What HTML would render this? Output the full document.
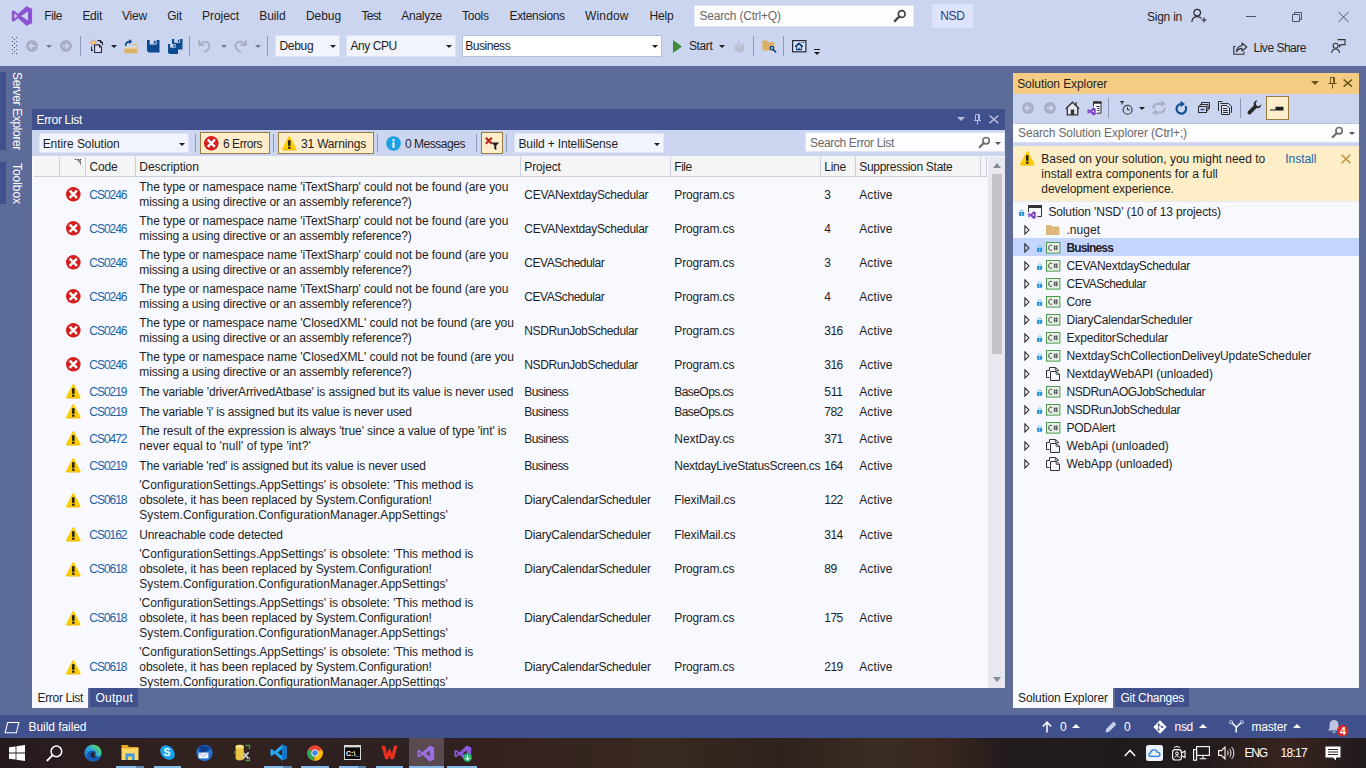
<!DOCTYPE html>
<html><head><meta charset="utf-8"><title>NSD - Microsoft Visual Studio</title>
<style>
*{box-sizing:border-box;margin:0;padding:0}
html,body{width:1366px;height:768px;overflow:hidden}
body{position:relative;background:#5D6B99;font-family:"Liberation Sans",sans-serif;font-size:12px;color:#1E1E1E}
.a{position:absolute}
.t{position:absolute;white-space:nowrap;line-height:16px}
svg{position:absolute;overflow:visible}
#top{left:0;top:0;width:1366px;height:66px;background:#CCD5F0}
.sep{position:absolute;width:1px;background:#8F98BB}
.combo{position:absolute;background:#F1F4FC;border:1px solid #DDE3F6}
.arr{position:absolute;width:0;height:0;border-left:3px solid transparent;border-right:3px solid transparent;border-top:3px solid #1E1E1E}
.arrg{border-top-color:#737990}
#status{left:0;top:715px;width:1366px;height:23px;background:#40508D;color:#fff}
#taskbar{left:0;top:738px;width:1366px;height:30px;background:linear-gradient(90deg,#241a1d 0px,#2c1e1f 80px,#32221f 190px,#2d2121 420px,#33211f 480px,#382920 667px,#2f211d 780px,#3b2d22 878px,#38261f 948px,#241c1c 1000px,#1f1b1c 1120px,#221b1c 1200px,#38241f 1290px,#211a1c 1366px)}
#el{left:32px;top:109px;width:973px;height:579px;background:#F7F9FE}
#se{left:1013px;top:73px;width:346px;height:615px;background:#F7F9FE}
.code{color:#1C64A8}
.tbtn{position:absolute;background:#FDEDCB;border:1px solid #9A7D3C}
.tab{position:absolute;height:20px}

</style></head><body>
<div id="top" class="a"><svg style="left:11px;top:6px" width="22" height="20" viewBox="0 0 22 20"><path d="M15.4 0.2 L21.1 2.7 V17.3 L15.4 19.8 L6.9 12.3 L2.7 15.8 L0.8 14.8 V5.2 L2.7 4.2 L6.9 7.7 Z M17 5.4 L10.2 10 L17 14.6 Z M3.5 7.6 V12.4 L6.4 10 Z" fill="#8A57D1" fill-rule="evenodd"/></svg><span class="t" style="left:44.3px;top:8px;letter-spacing:-0.436px;">File</span><span class="t" style="left:82.4px;top:8px;letter-spacing:-0.272px;">Edit</span><span class="t" style="left:122px;top:8px;letter-spacing:-0.249px;">View</span><span class="t" style="left:167.2px;top:8px;letter-spacing:-0.181px;">Git</span><span class="t" style="left:202px;top:8px;letter-spacing:-0.051px;">Project</span><span class="t" style="left:259.3px;top:8px;letter-spacing:-0.098px;">Build</span><span class="t" style="left:306px;top:8px;letter-spacing:-0.075px;">Debug</span><span class="t" style="left:361.5px;top:8px;letter-spacing:-0.729px;">Test</span><span class="t" style="left:401.3px;top:8px;letter-spacing:-0.286px;">Analyze</span><span class="t" style="left:462px;top:8px;letter-spacing:-0.243px;">Tools</span><span class="t" style="left:509.5px;top:8px;letter-spacing:-0.350px;">Extensions</span><span class="t" style="left:585px;top:8px;letter-spacing:0.169px;">Window</span><span class="t" style="left:649.4px;top:8px;letter-spacing:-0.147px;">Help</span><div class="a" style="left:694px;top:5px;width:220px;height:22px;background:#FDFDFF;border:1px solid #E3E8F7"></div><span class="t" style="left:699.5px;top:8px;letter-spacing:-0.204px;color:#6A6A6A">Search (Ctrl+Q)</span><svg style="left:893px;top:9px" width="14" height="14" viewBox="0 0 14 14"><circle cx="8.7" cy="5" r="3.4" fill="none" stroke="#424242" stroke-width="1.7"/><path d="M6.2 7.6 L1.2 12.6" stroke="#424242" stroke-width="2.2" stroke-linecap="butt"/></svg><div class="a" style="left:932px;top:4px;width:41px;height:24px;background:#DDE4F9"></div><span class="t" style="left:940.2px;top:8px;letter-spacing:-0.348px;color:#2E3B80">NSD</span><span class="t" style="left:1147px;top:8.5px;letter-spacing:-0.243px;">Sign in</span><svg style="left:1191px;top:8px" width="17" height="16" viewBox="0 0 17 16"><circle cx="6.2" cy="4.6" r="3.3" fill="none" stroke="#2b2b2b" stroke-width="1.2"/><path d="M0.8 14 C1.2 10.3 3.4 8.6 6.2 8.6 C8 8.6 9.4 9.2 10.4 10.4" fill="none" stroke="#2b2b2b" stroke-width="1.2"/><path d="M13 9.5 V14.5 M10.5 12 H15.5" stroke="#2b2b2b" stroke-width="1.1"/></svg><svg style="left:1240px;top:8px" width="120" height="18" viewBox="0 0 120 18"><path d="M6 8.5 H16" stroke="#4A5270" stroke-width="1"/><path d="M52.5 6.5 H59.5 V13.5 H52.5 Z M54.5 6.5 V4.5 H61.5 V11.5 H59.5" fill="none" stroke="#4A5270" stroke-width="1"/><path d="M98.5 4 L108.5 14 M108.5 4 L98.5 14" stroke="#4A5270" stroke-width="1"/></svg><svg style="left:12px;top:37px" width="5" height="17" viewBox="0 0 5 17"><rect x="0" y="0" width="1" height="1" fill="#4C5270"/><rect x="4" y="0" width="1" height="1" fill="#4C5270"/><rect x="2" y="2" width="1" height="1" fill="#4C5270"/><rect x="0" y="4" width="1" height="1" fill="#4C5270"/><rect x="4" y="4" width="1" height="1" fill="#4C5270"/><rect x="2" y="6" width="1" height="1" fill="#4C5270"/><rect x="0" y="8" width="1" height="1" fill="#4C5270"/><rect x="4" y="8" width="1" height="1" fill="#4C5270"/><rect x="2" y="10" width="1" height="1" fill="#4C5270"/><rect x="0" y="12" width="1" height="1" fill="#4C5270"/><rect x="4" y="12" width="1" height="1" fill="#4C5270"/><rect x="2" y="14" width="1" height="1" fill="#4C5270"/><rect x="0" y="16" width="1" height="1" fill="#4C5270"/><rect x="4" y="16" width="1" height="1" fill="#4C5270"/></svg><svg style="left:26px;top:40px" width="12" height="12" viewBox="0 0 12 12"><g><circle cx="6" cy="6" r="6" fill="#A9AEC6"/><path d="M9.2 6 H3.6 M6 3.4 L3.4 6 L6 8.6" fill="none" stroke="#CCD5F0" stroke-width="1.5"/></g></svg><div class="arr arrg" style="left:46px;top:45px"></div><svg style="left:60px;top:40px" width="12" height="12" viewBox="0 0 12 12"><g transform="translate(12,0) scale(-1,1)"><circle cx="6" cy="6" r="6" fill="#A9AEC6"/><path d="M9.2 6 H3.6 M6 3.4 L3.4 6 L6 8.6" fill="none" stroke="#CCD5F0" stroke-width="1.5"/></g></svg><div class="sep" style="left:80px;top:36px;height:20px"></div><svg style="left:89px;top:38px" width="15" height="16" viewBox="0 0 15 16"><path d="M8.4 2.6 H11.4 L13.5 4.7 V7.2" fill="none" stroke="#22283A" stroke-width="1.1"/><path d="M11 2.1 L14 5.1 H11 Z" fill="#22283A"/><path d="M5.6 6.9 H10.2 L12.5 9.2 V14.5 H5.6 Z" fill="#DCDDF2" stroke="#22283A" stroke-width="1.1"/><path d="M10 6.4 L13 9.4 H10 Z" fill="#22283A"/><path d="M2.5 8.6 V12.4 H4" fill="none" stroke="#22283A" stroke-width="1.1"/><path d="M4.4 1.2 V8 M1 4.6 H7.8 M2.1 2.3 L6.7 6.9 M6.7 2.3 L2.1 6.9" stroke="#DB8E22" stroke-width="0.9"/><circle cx="4.4" cy="4.6" r="1.7" fill="#F5B64A"/><circle cx="4.4" cy="4.6" r="0.9" fill="#FFF6DC"/></svg><div class="arr" style="left:111px;top:45px"></div><svg style="left:124px;top:39px" width="15" height="15" viewBox="0 0 15 15"><path d="M7.6 5.6 H13 V9.6" fill="none" stroke="#E3BC6E" stroke-width="1"/><rect x="0.5" y="8.2" width="12.6" height="1.7" fill="#EFD9A8"/><path d="M0.4 14.3 V9.7 H13.7 L12.9 14.3 Z" fill="#DDB062"/><path d="M1.8 7 C1.3 4 3.4 2.6 6 2.6" fill="none" stroke="#0E4A8F" stroke-width="1.7"/><path d="M5 0 L8.4 2.6 L5 5.2 Z" fill="#0E4A8F"/></svg><svg style="left:147px;top:40px" width="12.5" height="12.5" viewBox="0 0 12 12"><path d="M0 0 H12 V12 H1.6 L0 10.4 Z" fill="#0E4A8F"/><rect x="2.6" y="0" width="6.6" height="4.4" fill="#CCD5F0"/><rect x="6.6" y="0.8" width="1.6" height="2.8" fill="#0E4A8F"/></svg><svg style="left:172px;top:39px" width="10.5" height="10.5" viewBox="0 0 12 12"><path d="M0 0 H12 V12 H1.6 L0 10.4 Z" fill="#0E4A8F"/><rect x="2.6" y="0" width="6.6" height="4.4" fill="#CCD5F0"/><rect x="6.6" y="0.8" width="1.6" height="2.8" fill="#0E4A8F"/></svg><svg style="left:168px;top:44px" width="10" height="10" viewBox="0 0 12 12"><path d="M0 0 H12 V12 H1.6 L0 10.4 Z" fill="#0E4A8F"/><rect x="2.6" y="0" width="6.6" height="4.4" fill="#CCD5F0"/><rect x="6.6" y="0.8" width="1.6" height="2.8" fill="#0E4A8F"/></svg><div class="sep" style="left:189px;top:36px;height:20px"></div><svg style="left:198px;top:39px" width="14" height="14" viewBox="0 0 14 14"><path d="M1.2 1 V6.2 H6.4" fill="none" stroke="#A9AEC0" stroke-width="1.8"/><path d="M1.8 5.6 C4.5 2 9.5 1.8 11.2 5 C12.6 8 10.4 11.4 6.2 13.2" fill="none" stroke="#A9AEC0" stroke-width="1.8"/></svg><div class="arr arrg" style="left:221px;top:45px"></div><svg style="left:233px;top:39px" width="14" height="14" viewBox="0 0 14 14"><g transform="translate(14,0) scale(-1,1)"><path d="M1.2 1 V6.2 H6.4" fill="none" stroke="#A9AEC0" stroke-width="1.8"/><path d="M1.8 5.6 C4.5 2 9.5 1.8 11.2 5 C12.6 8 10.4 11.4 6.2 13.2" fill="none" stroke="#A9AEC0" stroke-width="1.8"/></g></svg><div class="arr arrg" style="left:255px;top:45px"></div><div class="sep" style="left:267px;top:36px;height:20px"></div><div class="combo" style="left:275px;top:35px;width:65px;height:22px"></div><span class="t" style="left:279.5px;top:38px;letter-spacing:-0.315px;">Debug</span><div class="arr" style="left:330px;top:45px"></div><div class="combo" style="left:346px;top:35px;width:110px;height:22px"></div><span class="t" style="left:350.5px;top:38px;letter-spacing:-0.437px;">Any CPU</span><div class="arr" style="left:446px;top:45px"></div><div class="a" style="left:462px;top:35px;width:200px;height:22px;background:#fff;border:1px solid #B4BEDF"></div><span class="t" style="left:465.2px;top:38px;letter-spacing:-0.463px;">Business</span><div class="arr" style="left:652px;top:45px"></div><svg style="left:672.5px;top:39.5px" width="9" height="13" viewBox="0 0 9 13"><path d="M0 0 L9 6.5 L0 13 Z" fill="#3F8B3A"/></svg><span class="t" style="left:689px;top:38px;letter-spacing:-0.389px;">Start</span><div class="arr" style="left:719px;top:45px"></div><svg style="left:734px;top:39px" width="12" height="14" viewBox="0 0 12 14"><path d="M5 0.5 C7 3 4 5.5 5.6 8 C6.4 6 8 5.6 8 3.6 C10.4 6 11.6 9.4 9.4 12 C7.6 14 3.6 14 1.8 12 C-0.2 9.6 0.8 6.4 3 4.6 C3 6 3.4 6.6 4 7 C3.4 4.4 4 2 5 0.5 Z" fill="#B9BED0"/></svg><div class="sep" style="left:753px;top:36px;height:20px"></div><svg style="left:762px;top:40px" width="16" height="14" viewBox="0 0 16 14"><path d="M0.4 10.6 V0.6 H5 L6.4 2.2 H12.4 V10.6 Z" fill="#DDB062"/><circle cx="9.9" cy="8.1" r="1.8" fill="#A8D8F5" stroke="#0F3F7F" stroke-width="1.3"/><path d="M11.2 9.5 L14 12.4" stroke="#0F3F7F" stroke-width="1.7"/></svg><div class="sep" style="left:783px;top:36px;height:20px"></div><svg style="left:792px;top:40px" width="14.5" height="12.5" viewBox="0 0 14.5 12.5"><rect x="0.6" y="0.6" width="13.3" height="11.2" fill="#DCE2F6" stroke="#22283A" stroke-width="1.2"/><path d="M4.6 6.2 V9.6 H9.4 V6.2 L7 4 Z" fill="#EEF2FC" stroke="#0E3F7F" stroke-width="1.1"/><path d="M3 6.7 L7 3.1 L11 6.7" fill="none" stroke="#0E3F7F" stroke-width="1.3"/><rect x="6.3" y="7.6" width="1.4" height="2.3" fill="#0E3F7F"/><rect x="9.4" y="2" width="1" height="1" fill="#22283A"/><rect x="11.2" y="2" width="1" height="1" fill="#22283A"/></svg><div class="a" style="left:814px;top:49px;width:6px;height:1px;background:#1E1E1E"></div><div class="arr" style="left:814px;top:52px"></div><svg style="left:1233px;top:41px" width="15" height="14" viewBox="0 0 15 14"><path d="M2.5 5.5 H0.8 V13.2 H11 V10.5" fill="none" stroke="#333" stroke-width="1.1"/><path d="M3.4 10.6 C3.8 7 6 5 9 4.8 V2 L13.8 6 L9 10 V7.4 C6.6 7.4 4.8 8.4 3.4 10.6 Z" fill="none" stroke="#333" stroke-width="1.1" stroke-linejoin="round"/></svg><span class="t" style="left:1253.5px;top:39.5px;letter-spacing:-0.487px;">Live Share</span><svg style="left:1331px;top:39px" width="15" height="15" viewBox="0 0 15 15"><path d="M6.5 0.6 H14 V5.6 H10.4 L8.6 7.4 V5.6" fill="none" stroke="#333" stroke-width="1.1"/><circle cx="4.6" cy="6.8" r="2.5" fill="none" stroke="#333" stroke-width="1.1"/><path d="M0.6 14 C1 11.2 2.6 10 4.6 10 C6.6 10 8.2 11.2 8.6 14" fill="none" stroke="#333" stroke-width="1.1"/></svg></div><div class="a" style="left:0;top:72px;width:6px;height:78px;background:#40508D"></div><div class="a" style="left:0;top:162px;width:6px;height:42px;background:#40508D"></div><span class="t" style="left:24.5px;top:72.3px;letter-spacing:-0.358px;color:#fff;transform-origin:0 0;transform:rotate(90deg)">Server Explorer</span><span class="t" style="left:24.5px;top:162.5px;letter-spacing:-0.054px;color:#fff;transform-origin:0 0;transform:rotate(90deg)">Toolbox</span><div id="el" class="a"><div class="a" style="left:0;top:0;width:973px;height:21px;background:#40508D"></div><span class="t" style="left:4.5px;top:3px;letter-spacing:-0.319px;color:#fff">Error List</span><div class="arr" style="left:925px;top:8px;border-top-color:#B4BCDC;border-width:0;border-left:4px solid transparent;border-right:4px solid transparent;border-top:4px solid #B4BCDC"></div><svg style="left:941px;top:5px" width="9" height="12" viewBox="0 0 9 12"><path d="M2.5 0.5 H6.5 V6.5 H2.5 Z M5.5 0.5 V6.5 M1 6.5 H8 M4.5 6.5 V10.8" fill="none" stroke="#B4BCDC" stroke-width="1"/></svg><svg style="left:957.1px;top:5.7px" width="9.9" height="8.6" viewBox="0 0 9.9 8.6"><path d="M0.6 0.5 L9.3 8.1 M9.3 0.5 L0.6 8.1" stroke="#B4BCDC" stroke-width="1.5"/></svg><div class="a" style="left:0;top:21px;width:973px;height:26px;background:#CCD5F0"></div><div class="combo" style="left:7px;top:24px;width:150px;height:20px"></div><span class="t" style="left:10.7px;top:27px;letter-spacing:-0.070px;">Entire Solution</span><div class="arr" style="left:146.5px;top:33.5px"></div><div class="sep" style="left:162.5px;top:25px;height:18px"></div><div class="tbtn" style="left:168px;top:23px;width:70px;height:22px"></div><svg style="left:171.8px;top:26.7px" width="14.6" height="14.6" viewBox="0 0 14.6 14.6"><circle cx="7.3" cy="7.3" r="7.3" fill="#D81E1E"/><path d="M3.7 3.7 L10.9 10.9 M10.9 3.7 L3.7 10.9" stroke="#fff" stroke-width="2.4"/></svg><span class="t" style="left:191px;top:26.5px;letter-spacing:-0.461px;">6 Errors</span><div class="sep" style="left:241px;top:25px;height:18px"></div><div class="tbtn" style="left:246px;top:23px;width:96px;height:22px"></div><svg style="left:249.8px;top:26.6px" width="14.6" height="14.4" viewBox="0 0 14.6 14.4"><path d="M7.3 1 L13.7 13.4 H0.9 Z" fill="#FFCC00" stroke="#FFCC00" stroke-width="1.8" stroke-linejoin="round"/><path d="M1.2 13.9 H13.4" stroke="#E8B500" stroke-width="0.8"/><path d="M7.3 4.2 V9.8" stroke="#1E1E1E" stroke-width="2.5"/><rect x="6.05" y="10.7" width="2.5" height="2" fill="#1E1E1E"/></svg><span class="t" style="left:269px;top:26.5px;letter-spacing:-0.175px;">31 Warnings</span><div class="sep" style="left:345px;top:25px;height:18px"></div><svg style="left:354px;top:26.5px" width="15" height="15" viewBox="0 0 15 15"><circle cx="7.5" cy="7.5" r="7.3" fill="#1BA1E2"/><rect x="6.5" y="6.2" width="2" height="5.6" fill="#fff"/><rect x="6.5" y="3.2" width="2" height="2" fill="#fff"/></svg><span class="t" style="left:373px;top:26.5px;letter-spacing:-0.470px;">0 Messages</span><div class="sep" style="left:444px;top:25px;height:18px"></div><div class="tbtn" style="left:449px;top:23px;width:22px;height:22px"></div><svg style="left:453px;top:27.6px" width="15" height="14" viewBox="0 0 15 14"><path d="M0.8 0.8 L6.8 6.8 M6.8 0.8 L0.8 6.8" stroke="#B8201A" stroke-width="2"/><path d="M6.4 5.4 H14.2 L11.3 8.6 V13.2 L9.3 11.8 V8.6 Z" fill="#1E1E1E"/></svg><div class="sep" style="left:474px;top:25px;height:18px"></div><div class="combo" style="left:482px;top:24px;width:150px;height:20px"></div><span class="t" style="left:486.5px;top:27px;letter-spacing:-0.145px;">Build + IntelliSense</span><div class="arr" style="left:621.5px;top:33.5px"></div><div class="a" style="left:773px;top:23px;width:200px;height:20px;background:#FDFDFF;border:1px solid #DDE3F3"></div><span class="t" style="left:778px;top:26px;letter-spacing:-0.355px;color:#6A6A6A">Search Error List</span><svg style="left:945.5px;top:27px" width="13" height="13" viewBox="0 0 14 14"><circle cx="8.7" cy="5" r="3.4" fill="none" stroke="#6E6E6E" stroke-width="1.8"/><path d="M6.2 7.6 L1.2 12.6" stroke="#6E6E6E" stroke-width="2.4"/></svg><div class="arr" style="left:962.5px;top:32.5px;border-top-color:#555"></div><div class="a" style="left:2px;top:47px;width:953px;height:21px;background:#F5F5F6;border-bottom:1px solid #CCCEDB"></div><div class="a" style="left:27px;top:48px;width:1px;height:19px;background:#CCCEDB"></div><div class="a" style="left:53px;top:48px;width:1px;height:19px;background:#CCCEDB"></div><div class="a" style="left:103px;top:48px;width:1px;height:19px;background:#CCCEDB"></div><div class="a" style="left:488px;top:48px;width:1px;height:19px;background:#CCCEDB"></div><div class="a" style="left:638px;top:48px;width:1px;height:19px;background:#CCCEDB"></div><div class="a" style="left:788px;top:48px;width:1px;height:19px;background:#CCCEDB"></div><div class="a" style="left:823px;top:48px;width:1px;height:19px;background:#CCCEDB"></div><div class="a" style="left:948px;top:48px;width:1px;height:19px;background:#CCCEDB"></div><div class="a" style="left:954px;top:48px;width:1px;height:19px;background:#CCCEDB"></div><svg style="left:43px;top:50px" width="6" height="6" viewBox="0 0 6 6"><path d="M0 0.5 H6 M5.5 0 V5.6" stroke="#333" stroke-width="1" stroke-dasharray="1 0.6"/><path d="M1.8 1 H5 V4.4 Z" fill="#8a8a8a"/></svg><span class="t" style="left:57.5px;top:50px;letter-spacing:-0.172px;">Code</span><span class="t" style="left:107.3px;top:50px;letter-spacing:-0.048px;">Description</span><span class="t" style="left:492.3px;top:50px;letter-spacing:-0.123px;">Project</span><span class="t" style="left:642.3px;top:50px;letter-spacing:-0.461px;">File</span><span class="t" style="left:792.3px;top:50px;letter-spacing:-0.297px;">Line</span><span class="t" style="left:827.2px;top:50px;letter-spacing:-0.280px;">Suppression State</span><div class="a" style="left:2px;top:68px;width:953px;height:511px;overflow:hidden"><svg style="left:31.8px;top:10.2px" width="14.6" height="14.6" viewBox="0 0 14.6 14.6"><circle cx="7.3" cy="7.3" r="7.3" fill="#D81E1E"/><path d="M3.7 3.7 L10.9 10.9 M10.9 3.7 L3.7 10.9" stroke="#fff" stroke-width="2.4"/></svg><span class="t" style="left:55.3px;top:9.5px;letter-spacing:-1.029px;color:#1C64A8">CS0246</span><span class="t" style="left:105.30000000000001px;top:2.0px;letter-spacing:-0.067px;">The type or namespace name 'iTextSharp' could not be found (are you</span><span class="t" style="left:105.30000000000001px;top:17.0px;letter-spacing:-0.149px;">missing a using directive or an assembly reference?)</span><span class="t" style="left:490.29999999999995px;top:9.5px;letter-spacing:-0.292px;">CEVANextdaySchedular</span><span class="t" style="left:640.3px;top:9.5px;letter-spacing:-0.136px;">Program.cs</span><span class="t" style="left:790.3px;top:9.5px;">3</span><span class="t" style="left:825.2px;top:9.5px;letter-spacing:0.135px;">Active</span><svg style="left:31.8px;top:44.2px" width="14.6" height="14.6" viewBox="0 0 14.6 14.6"><circle cx="7.3" cy="7.3" r="7.3" fill="#D81E1E"/><path d="M3.7 3.7 L10.9 10.9 M10.9 3.7 L3.7 10.9" stroke="#fff" stroke-width="2.4"/></svg><span class="t" style="left:55.3px;top:43.5px;letter-spacing:-1.029px;color:#1C64A8">CS0246</span><span class="t" style="left:105.30000000000001px;top:36.0px;letter-spacing:-0.067px;">The type or namespace name 'iTextSharp' could not be found (are you</span><span class="t" style="left:105.30000000000001px;top:51.0px;letter-spacing:-0.149px;">missing a using directive or an assembly reference?)</span><span class="t" style="left:490.29999999999995px;top:43.5px;letter-spacing:-0.292px;">CEVANextdaySchedular</span><span class="t" style="left:640.3px;top:43.5px;letter-spacing:-0.136px;">Program.cs</span><span class="t" style="left:790.3px;top:43.5px;">4</span><span class="t" style="left:825.2px;top:43.5px;letter-spacing:0.135px;">Active</span><svg style="left:31.8px;top:78.2px" width="14.6" height="14.6" viewBox="0 0 14.6 14.6"><circle cx="7.3" cy="7.3" r="7.3" fill="#D81E1E"/><path d="M3.7 3.7 L10.9 10.9 M10.9 3.7 L3.7 10.9" stroke="#fff" stroke-width="2.4"/></svg><span class="t" style="left:55.3px;top:77.5px;letter-spacing:-1.029px;color:#1C64A8">CS0246</span><span class="t" style="left:105.30000000000001px;top:70.0px;letter-spacing:-0.067px;">The type or namespace name 'iTextSharp' could not be found (are you</span><span class="t" style="left:105.30000000000001px;top:85.0px;letter-spacing:-0.149px;">missing a using directive or an assembly reference?)</span><span class="t" style="left:490.29999999999995px;top:77.5px;letter-spacing:-0.448px;">CEVASchedular</span><span class="t" style="left:640.3px;top:77.5px;letter-spacing:-0.136px;">Program.cs</span><span class="t" style="left:790.3px;top:77.5px;">3</span><span class="t" style="left:825.2px;top:77.5px;letter-spacing:0.135px;">Active</span><svg style="left:31.8px;top:112.2px" width="14.6" height="14.6" viewBox="0 0 14.6 14.6"><circle cx="7.3" cy="7.3" r="7.3" fill="#D81E1E"/><path d="M3.7 3.7 L10.9 10.9 M10.9 3.7 L3.7 10.9" stroke="#fff" stroke-width="2.4"/></svg><span class="t" style="left:55.3px;top:111.5px;letter-spacing:-1.029px;color:#1C64A8">CS0246</span><span class="t" style="left:105.30000000000001px;top:104.0px;letter-spacing:-0.067px;">The type or namespace name 'iTextSharp' could not be found (are you</span><span class="t" style="left:105.30000000000001px;top:119.0px;letter-spacing:-0.149px;">missing a using directive or an assembly reference?)</span><span class="t" style="left:490.29999999999995px;top:111.5px;letter-spacing:-0.448px;">CEVASchedular</span><span class="t" style="left:640.3px;top:111.5px;letter-spacing:-0.136px;">Program.cs</span><span class="t" style="left:790.3px;top:111.5px;">4</span><span class="t" style="left:825.2px;top:111.5px;letter-spacing:0.135px;">Active</span><svg style="left:31.8px;top:146.2px" width="14.6" height="14.6" viewBox="0 0 14.6 14.6"><circle cx="7.3" cy="7.3" r="7.3" fill="#D81E1E"/><path d="M3.7 3.7 L10.9 10.9 M10.9 3.7 L3.7 10.9" stroke="#fff" stroke-width="2.4"/></svg><span class="t" style="left:55.3px;top:145.5px;letter-spacing:-1.029px;color:#1C64A8">CS0246</span><span class="t" style="left:105.30000000000001px;top:138.0px;letter-spacing:-0.065px;">The type or namespace name 'ClosedXML' could not be found (are you</span><span class="t" style="left:105.30000000000001px;top:153.0px;letter-spacing:-0.149px;">missing a using directive or an assembly reference?)</span><span class="t" style="left:490.29999999999995px;top:145.5px;letter-spacing:-0.402px;">NSDRunJobSchedular</span><span class="t" style="left:640.3px;top:145.5px;letter-spacing:-0.136px;">Program.cs</span><span class="t" style="left:790.3px;top:145.5px;letter-spacing:-0.510px;">316</span><span class="t" style="left:825.2px;top:145.5px;letter-spacing:0.135px;">Active</span><svg style="left:31.8px;top:180.2px" width="14.6" height="14.6" viewBox="0 0 14.6 14.6"><circle cx="7.3" cy="7.3" r="7.3" fill="#D81E1E"/><path d="M3.7 3.7 L10.9 10.9 M10.9 3.7 L3.7 10.9" stroke="#fff" stroke-width="2.4"/></svg><span class="t" style="left:55.3px;top:179.5px;letter-spacing:-1.029px;color:#1C64A8">CS0246</span><span class="t" style="left:105.30000000000001px;top:172.0px;letter-spacing:-0.065px;">The type or namespace name 'ClosedXML' could not be found (are you</span><span class="t" style="left:105.30000000000001px;top:187.0px;letter-spacing:-0.149px;">missing a using directive or an assembly reference?)</span><span class="t" style="left:490.29999999999995px;top:179.5px;letter-spacing:-0.402px;">NSDRunJobSchedular</span><span class="t" style="left:640.3px;top:179.5px;letter-spacing:-0.136px;">Program.cs</span><span class="t" style="left:790.3px;top:179.5px;letter-spacing:-0.510px;">316</span><span class="t" style="left:825.2px;top:179.5px;letter-spacing:0.135px;">Active</span><svg style="left:31.8px;top:207.2px" width="14.6" height="14.4" viewBox="0 0 14.6 14.4"><path d="M7.3 1 L13.7 13.4 H0.9 Z" fill="#FFCC00" stroke="#FFCC00" stroke-width="1.8" stroke-linejoin="round"/><path d="M1.2 13.9 H13.4" stroke="#E8B500" stroke-width="0.8"/><path d="M7.3 4.2 V9.8" stroke="#1E1E1E" stroke-width="2.5"/><rect x="6.05" y="10.7" width="2.5" height="2" fill="#1E1E1E"/></svg><span class="t" style="left:55.3px;top:206.5px;letter-spacing:-1.029px;color:#1C64A8">CS0219</span><span class="t" style="left:105.30000000000001px;top:206.5px;letter-spacing:-0.146px;">The variable 'driverArrivedAtbase' is assigned but its value is never used</span><span class="t" style="left:490.29999999999995px;top:206.5px;letter-spacing:-0.588px;">Business</span><span class="t" style="left:640.3px;top:206.5px;letter-spacing:-0.570px;">BaseOps.cs</span><span class="t" style="left:790.3px;top:206.5px;letter-spacing:-0.214px;">511</span><span class="t" style="left:825.2px;top:206.5px;letter-spacing:0.135px;">Active</span><svg style="left:31.8px;top:227.2px" width="14.6" height="14.4" viewBox="0 0 14.6 14.4"><path d="M7.3 1 L13.7 13.4 H0.9 Z" fill="#FFCC00" stroke="#FFCC00" stroke-width="1.8" stroke-linejoin="round"/><path d="M1.2 13.9 H13.4" stroke="#E8B500" stroke-width="0.8"/><path d="M7.3 4.2 V9.8" stroke="#1E1E1E" stroke-width="2.5"/><rect x="6.05" y="10.7" width="2.5" height="2" fill="#1E1E1E"/></svg><span class="t" style="left:55.3px;top:226.5px;letter-spacing:-1.029px;color:#1C64A8">CS0219</span><span class="t" style="left:105.30000000000001px;top:226.5px;letter-spacing:-0.171px;">The variable 'i' is assigned but its value is never used</span><span class="t" style="left:490.29999999999995px;top:226.5px;letter-spacing:-0.588px;">Business</span><span class="t" style="left:640.3px;top:226.5px;letter-spacing:-0.570px;">BaseOps.cs</span><span class="t" style="left:790.3px;top:226.5px;letter-spacing:-0.510px;">782</span><span class="t" style="left:825.2px;top:226.5px;letter-spacing:0.135px;">Active</span><svg style="left:31.8px;top:254.2px" width="14.6" height="14.4" viewBox="0 0 14.6 14.4"><path d="M7.3 1 L13.7 13.4 H0.9 Z" fill="#FFCC00" stroke="#FFCC00" stroke-width="1.8" stroke-linejoin="round"/><path d="M1.2 13.9 H13.4" stroke="#E8B500" stroke-width="0.8"/><path d="M7.3 4.2 V9.8" stroke="#1E1E1E" stroke-width="2.5"/><rect x="6.05" y="10.7" width="2.5" height="2" fill="#1E1E1E"/></svg><span class="t" style="left:55.3px;top:253.5px;letter-spacing:-1.029px;color:#1C64A8">CS0472</span><span class="t" style="left:105.30000000000001px;top:246.0px;letter-spacing:-0.092px;">The result of the expression is always 'true' since a value of type 'int' is</span><span class="t" style="left:105.30000000000001px;top:261.0px;letter-spacing:0.062px;">never equal to 'null' of type 'int?'</span><span class="t" style="left:490.29999999999995px;top:253.5px;letter-spacing:-0.588px;">Business</span><span class="t" style="left:640.3px;top:253.5px;letter-spacing:-0.047px;">NextDay.cs</span><span class="t" style="left:790.3px;top:253.5px;letter-spacing:-0.510px;">371</span><span class="t" style="left:825.2px;top:253.5px;letter-spacing:0.135px;">Active</span><svg style="left:31.8px;top:281.2px" width="14.6" height="14.4" viewBox="0 0 14.6 14.4"><path d="M7.3 1 L13.7 13.4 H0.9 Z" fill="#FFCC00" stroke="#FFCC00" stroke-width="1.8" stroke-linejoin="round"/><path d="M1.2 13.9 H13.4" stroke="#E8B500" stroke-width="0.8"/><path d="M7.3 4.2 V9.8" stroke="#1E1E1E" stroke-width="2.5"/><rect x="6.05" y="10.7" width="2.5" height="2" fill="#1E1E1E"/></svg><span class="t" style="left:55.3px;top:280.5px;letter-spacing:-1.029px;color:#1C64A8">CS0219</span><span class="t" style="left:105.30000000000001px;top:280.5px;letter-spacing:-0.177px;">The variable 'red' is assigned but its value is never used</span><span class="t" style="left:490.29999999999995px;top:280.5px;letter-spacing:-0.588px;">Business</span><span class="t" style="left:640.3px;top:280.5px;letter-spacing:-0.285px;">NextdayLiveStatusScreen.cs</span><span class="t" style="left:790.3px;top:280.5px;letter-spacing:-0.510px;">164</span><span class="t" style="left:825.2px;top:280.5px;letter-spacing:0.135px;">Active</span><svg style="left:31.8px;top:315.7px" width="14.6" height="14.4" viewBox="0 0 14.6 14.4"><path d="M7.3 1 L13.7 13.4 H0.9 Z" fill="#FFCC00" stroke="#FFCC00" stroke-width="1.8" stroke-linejoin="round"/><path d="M1.2 13.9 H13.4" stroke="#E8B500" stroke-width="0.8"/><path d="M7.3 4.2 V9.8" stroke="#1E1E1E" stroke-width="2.5"/><rect x="6.05" y="10.7" width="2.5" height="2" fill="#1E1E1E"/></svg><span class="t" style="left:55.3px;top:315.0px;letter-spacing:-1.029px;color:#1C64A8">CS0618</span><span class="t" style="left:105.30000000000001px;top:300.0px;letter-spacing:-0.017px;">'ConfigurationSettings.AppSettings' is obsolete: 'This method is</span><span class="t" style="left:105.30000000000001px;top:315.0px;letter-spacing:-0.091px;">obsolete, it has been replaced by System.Configuration!</span><span class="t" style="left:105.30000000000001px;top:330.0px;letter-spacing:0.038px;">System.Configuration.ConfigurationManager.AppSettings'</span><span class="t" style="left:490.29999999999995px;top:315.0px;letter-spacing:-0.192px;">DiaryCalendarScheduler</span><span class="t" style="left:640.3px;top:315.0px;letter-spacing:-0.139px;">FlexiMail.cs</span><span class="t" style="left:790.3px;top:315.0px;letter-spacing:-0.510px;">122</span><span class="t" style="left:825.2px;top:315.0px;letter-spacing:0.135px;">Active</span><svg style="left:31.8px;top:350.2px" width="14.6" height="14.4" viewBox="0 0 14.6 14.4"><path d="M7.3 1 L13.7 13.4 H0.9 Z" fill="#FFCC00" stroke="#FFCC00" stroke-width="1.8" stroke-linejoin="round"/><path d="M1.2 13.9 H13.4" stroke="#E8B500" stroke-width="0.8"/><path d="M7.3 4.2 V9.8" stroke="#1E1E1E" stroke-width="2.5"/><rect x="6.05" y="10.7" width="2.5" height="2" fill="#1E1E1E"/></svg><span class="t" style="left:55.3px;top:349.5px;letter-spacing:-1.029px;color:#1C64A8">CS0162</span><span class="t" style="left:105.30000000000001px;top:349.5px;letter-spacing:-0.131px;">Unreachable code detected</span><span class="t" style="left:490.29999999999995px;top:349.5px;letter-spacing:-0.192px;">DiaryCalendarScheduler</span><span class="t" style="left:640.3px;top:349.5px;letter-spacing:-0.139px;">FlexiMail.cs</span><span class="t" style="left:790.3px;top:349.5px;letter-spacing:-0.510px;">314</span><span class="t" style="left:825.2px;top:349.5px;letter-spacing:0.135px;">Active</span><svg style="left:31.8px;top:384.7px" width="14.6" height="14.4" viewBox="0 0 14.6 14.4"><path d="M7.3 1 L13.7 13.4 H0.9 Z" fill="#FFCC00" stroke="#FFCC00" stroke-width="1.8" stroke-linejoin="round"/><path d="M1.2 13.9 H13.4" stroke="#E8B500" stroke-width="0.8"/><path d="M7.3 4.2 V9.8" stroke="#1E1E1E" stroke-width="2.5"/><rect x="6.05" y="10.7" width="2.5" height="2" fill="#1E1E1E"/></svg><span class="t" style="left:55.3px;top:384.0px;letter-spacing:-1.029px;color:#1C64A8">CS0618</span><span class="t" style="left:105.30000000000001px;top:369.0px;letter-spacing:-0.017px;">'ConfigurationSettings.AppSettings' is obsolete: 'This method is</span><span class="t" style="left:105.30000000000001px;top:384.0px;letter-spacing:-0.091px;">obsolete, it has been replaced by System.Configuration!</span><span class="t" style="left:105.30000000000001px;top:399.0px;letter-spacing:0.038px;">System.Configuration.ConfigurationManager.AppSettings'</span><span class="t" style="left:490.29999999999995px;top:384.0px;letter-spacing:-0.192px;">DiaryCalendarScheduler</span><span class="t" style="left:640.3px;top:384.0px;letter-spacing:-0.136px;">Program.cs</span><span class="t" style="left:790.3px;top:384.0px;letter-spacing:-0.430px;">89</span><span class="t" style="left:825.2px;top:384.0px;letter-spacing:0.135px;">Active</span><svg style="left:31.8px;top:433.7px" width="14.6" height="14.4" viewBox="0 0 14.6 14.4"><path d="M7.3 1 L13.7 13.4 H0.9 Z" fill="#FFCC00" stroke="#FFCC00" stroke-width="1.8" stroke-linejoin="round"/><path d="M1.2 13.9 H13.4" stroke="#E8B500" stroke-width="0.8"/><path d="M7.3 4.2 V9.8" stroke="#1E1E1E" stroke-width="2.5"/><rect x="6.05" y="10.7" width="2.5" height="2" fill="#1E1E1E"/></svg><span class="t" style="left:55.3px;top:433.0px;letter-spacing:-1.029px;color:#1C64A8">CS0618</span><span class="t" style="left:105.30000000000001px;top:418.0px;letter-spacing:-0.017px;">'ConfigurationSettings.AppSettings' is obsolete: 'This method is</span><span class="t" style="left:105.30000000000001px;top:433.0px;letter-spacing:-0.091px;">obsolete, it has been replaced by System.Configuration!</span><span class="t" style="left:105.30000000000001px;top:448.0px;letter-spacing:0.038px;">System.Configuration.ConfigurationManager.AppSettings'</span><span class="t" style="left:490.29999999999995px;top:433.0px;letter-spacing:-0.192px;">DiaryCalendarScheduler</span><span class="t" style="left:640.3px;top:433.0px;letter-spacing:-0.136px;">Program.cs</span><span class="t" style="left:790.3px;top:433.0px;letter-spacing:-0.510px;">175</span><span class="t" style="left:825.2px;top:433.0px;letter-spacing:0.135px;">Active</span><svg style="left:31.8px;top:482.7px" width="14.6" height="14.4" viewBox="0 0 14.6 14.4"><path d="M7.3 1 L13.7 13.4 H0.9 Z" fill="#FFCC00" stroke="#FFCC00" stroke-width="1.8" stroke-linejoin="round"/><path d="M1.2 13.9 H13.4" stroke="#E8B500" stroke-width="0.8"/><path d="M7.3 4.2 V9.8" stroke="#1E1E1E" stroke-width="2.5"/><rect x="6.05" y="10.7" width="2.5" height="2" fill="#1E1E1E"/></svg><span class="t" style="left:55.3px;top:482.0px;letter-spacing:-1.029px;color:#1C64A8">CS0618</span><span class="t" style="left:105.30000000000001px;top:467.0px;letter-spacing:-0.017px;">'ConfigurationSettings.AppSettings' is obsolete: 'This method is</span><span class="t" style="left:105.30000000000001px;top:482.0px;letter-spacing:-0.091px;">obsolete, it has been replaced by System.Configuration!</span><span class="t" style="left:105.30000000000001px;top:497.0px;letter-spacing:0.038px;">System.Configuration.ConfigurationManager.AppSettings'</span><span class="t" style="left:490.29999999999995px;top:482.0px;letter-spacing:-0.192px;">DiaryCalendarScheduler</span><span class="t" style="left:640.3px;top:482.0px;letter-spacing:-0.136px;">Program.cs</span><span class="t" style="left:790.3px;top:482.0px;letter-spacing:-0.510px;">219</span><span class="t" style="left:825.2px;top:482.0px;letter-spacing:0.135px;">Active</span></div><div class="a" style="left:956px;top:48px;width:17px;height:531px;background:#E8E9F0"></div><div class="a" style="left:959.5px;top:64.5px;width:10px;height:180px;background:#C2C3C9"></div><div class="a" style="left:960.5px;top:54px;width:0;height:0;border-left:4px solid transparent;border-right:4px solid transparent;border-bottom:5px solid #868999"></div><div class="a" style="left:960.5px;top:568px;width:0;height:0;border-left:4px solid transparent;border-right:4px solid transparent;border-top:5px solid #868999"></div></div><div class="a" style="left:32px;top:688px;width:56px;height:20px;background:#F7F9FE"></div><span class="t" style="left:37.5px;top:690px;letter-spacing:-0.319px;">Error List</span><div class="a" style="left:90px;top:688px;width:48px;height:19px;background:#40508D"></div><span class="t" style="left:95.5px;top:690px;letter-spacing:0.245px;color:#fff">Output</span><div id="se" class="a"><div class="a" style="left:0;top:0;width:346px;height:21px;background:#F5CC84"></div><span class="t" style="left:4.2px;top:2.5px;letter-spacing:-0.082px;">Solution Explorer</span><div class="a" style="left:297.5px;top:8px;width:0;height:0;border-left:4px solid transparent;border-right:4px solid transparent;border-top:4px solid #6E5414"></div><svg style="left:314.5px;top:4px" width="9" height="12" viewBox="0 0 9 12"><path d="M2.5 0.5 H6.5 V6.5 H2.5 Z M5.5 0.5 V6.5 M0.5 6.5 H8.5 M4.5 6.5 V11.5" fill="none" stroke="#6E5414" stroke-width="1"/></svg><svg style="left:330.4px;top:6.1px" width="9.6" height="8.2" viewBox="0 0 9.6 8.2"><path d="M0.6 0.5 L9 7.7 M9 0.5 L0.6 7.7" stroke="#6E5414" stroke-width="1.5"/></svg><div class="a" style="left:0;top:21px;width:346px;height:29px;background:#CCD5F0"></div><svg style="left:9px;top:29px" width="12" height="12" viewBox="0 0 12 12"><g><circle cx="6" cy="6" r="6" fill="#A9AEC6"/><path d="M9.2 6 H3.6 M6 3.4 L3.4 6 L6 8.6" fill="none" stroke="#CCD5F0" stroke-width="1.5"/></g></svg><svg style="left:31px;top:29px" width="12" height="12" viewBox="0 0 12 12"><g transform="translate(12,0) scale(-1,1)"><circle cx="6" cy="6" r="6" fill="#A9AEC6"/><path d="M9.2 6 H3.6 M6 3.4 L3.4 6 L6 8.6" fill="none" stroke="#CCD5F0" stroke-width="1.5"/></g></svg><svg style="left:51.7px;top:28px" width="15" height="15" viewBox="0 0 15 15"><path d="M2 7.5 L7.5 2.2 L13 7.5 V14 H2 Z" fill="#E6E8F0"/><path d="M0.8 7.7 L7.5 1.3 L14.2 7.7" fill="none" stroke="#333" stroke-width="1.4"/><path d="M2.3 7 V13.9 H12.7 V7" fill="none" stroke="#333" stroke-width="1.3"/><rect x="5.8" y="8.6" width="3.4" height="5.4" fill="#333"/><rect x="10.5" y="0.9" width="1.2" height="4" fill="#333"/></svg><svg style="left:73.6px;top:27.5px" width="15" height="15" viewBox="0 0 15 15"><path d="M6.5 5.5 V1 H14 V12.2 H9.5" fill="#F7F9FE" stroke="#2b2b2b" stroke-width="1"/><rect x="6" y="0.5" width="8.5" height="2.2" fill="#2b2b2b"/><path d="M9.3 5.5 H12.6 M10.4 7.5 H12.6 M10.4 9.5 H12.6" stroke="#2b2b2b" stroke-width="1"/><g transform="translate(0.2,6.3) scale(0.4,0.41)"><path d="M15.4 0.2 L21.1 2.7 V17.3 L15.4 19.8 L6.9 12.3 L2.7 15.8 L0.8 14.8 V5.2 L2.7 4.2 L6.9 7.7 Z M16.6 6.8 L11.6 10 L16.6 13.2 Z M3.6 8.4 V11.6 L5.6 10 Z" fill="#7B3FC4" fill-rule="evenodd"/></g></svg><div class="sep" style="left:95px;top:25px;height:20px"></div><svg style="left:105.5px;top:27px" width="15" height="15" viewBox="0 0 15 15"><circle cx="8.6" cy="9.7" r="4.5" fill="none" stroke="#333" stroke-width="1.1"/><path d="M8.6 6.8 V9.9 H11" fill="none" stroke="#333" stroke-width="1"/><path d="M0.8 1 H5.4 L3.7 2.9 V4.6 H2.5 V2.9 Z" fill="#333"/></svg><div class="arr" style="left:126px;top:34px"></div><svg style="left:139px;top:27.7px" width="14" height="14.4" viewBox="0 0 14 14.4"><g><path d="M1.5 7.6 C1 4.6 3 2.9 5.6 2.9 H10" fill="none" stroke="#AAB0C8" stroke-width="2.4"/><path d="M9.4 -0.4 L14 2.9 L9.4 6.2 Z" fill="#AAB0C8"/></g><g transform="rotate(180 7 7.2)"><path d="M1.5 7.6 C1 4.6 3 2.9 5.6 2.9 H10" fill="none" stroke="#AAB0C8" stroke-width="2.4"/><path d="M9.4 -0.4 L14 2.9 L9.4 6.2 Z" fill="#AAB0C8"/></g></svg><svg style="left:161.2px;top:27.2px" width="14" height="15" viewBox="0 0 14 15"><path d="M11.4 6.2 A4.8 4.8 0 1 1 6.8 4" fill="none" stroke="#0E4F92" stroke-width="2.2"/><path d="M6.6 0.8 L11 4 L6.6 7.2 Z" fill="#0E4F92"/></svg><svg style="left:185px;top:29px" width="12" height="11" viewBox="0 0 12 11"><path d="M3.5 2.5 V0.5 H11.5 V6.5 H10" fill="none" stroke="#2b2b2b" stroke-width="1"/><path d="M2 4.5 V2.5 H10 V8.5 H8.5" fill="none" stroke="#2b2b2b" stroke-width="1"/><rect x="0.5" y="4.5" width="8" height="6" fill="none" stroke="#2b2b2b" stroke-width="1"/><path d="M2.5 7.5 H6.5" stroke="#1F3F77" stroke-width="1.4"/></svg><svg style="left:205px;top:28px" width="15" height="14" viewBox="0 0 15 14"><path d="M0.5 10 V0.5 H4.5" fill="none" stroke="#2b2b2b" stroke-width="1"/><path d="M2.5 2.5 H10.5 L13.5 5.2 V11.5 H12.8" fill="none" stroke="#2b2b2b" stroke-width="1"/><path d="M3.5 4.5 H9 L11.5 7 V13.5 H3.5 Z" fill="#DDE3F5" stroke="#2b2b2b" stroke-width="1"/><path d="M5 7.5 H9 M5 9.5 H10 M5 11.5 H10" stroke="#2b2b2b" stroke-width="1"/></svg><div class="sep" style="left:226.5px;top:25px;height:20px"></div><svg style="left:234px;top:27px" width="15" height="15" viewBox="0 0 15 15"><path d="M10.4 0.6 C8 0.4 6 2.6 6.8 5.4 L0.8 11.6 C0.2 12.6 0.6 13.6 1.4 14.2 C2.2 14.8 3.2 14.6 3.8 14 L9.6 8 C12.2 8.8 14.6 6.8 14.2 4.2 L11.8 6.4 L9.4 5.6 L8.6 3.2 Z" fill="#2b2b2b"/></svg><div class="tbtn" style="left:252.5px;top:23px;width:23px;height:24px"></div><svg style="left:257px;top:32.5px" width="14" height="5" viewBox="0 0 14 5"><path d="M0 3.6 H5.5 V0.8 H13.5 V4.6 H0 Z" fill="#1E1E1E"/></svg><div class="a" style="left:1px;top:50px;width:345px;height:20px;background:#FDFDFF;border-top:1px solid #B9C2E0;border-bottom:1px solid #D5DCF0"></div><span class="t" style="left:5px;top:52px;letter-spacing:-0.124px;color:#6A6A6A">Search Solution Explorer (Ctrl+;)</span><svg style="left:318px;top:53px" width="13" height="13" viewBox="0 0 14 14"><circle cx="8.7" cy="5" r="3.4" fill="none" stroke="#6E6E6E" stroke-width="1.8"/><path d="M6.2 7.6 L1.2 12.6" stroke="#6E6E6E" stroke-width="2.4"/></svg><div class="arr" style="left:336px;top:58.5px;border-top-color:#555"></div><div class="a" style="left:0;top:70px;width:346px;height:3px;background:#CCD5F0"></div><div class="a" style="left:0;top:73px;width:346px;height:55px;background:#FDEEC8"></div><svg style="left:7px;top:78px" width="14.6" height="14.4" viewBox="0 0 14.6 14.4"><path d="M7.3 1 L13.7 13.4 H0.9 Z" fill="#FFCC00" stroke="#FFCC00" stroke-width="1.8" stroke-linejoin="round"/><path d="M1.2 13.9 H13.4" stroke="#E8B500" stroke-width="0.8"/><path d="M7.3 4.2 V9.8" stroke="#1E1E1E" stroke-width="2.5"/><rect x="6.05" y="10.7" width="2.5" height="2" fill="#1E1E1E"/></svg><span class="t" style="left:28.3px;top:79px;letter-spacing:-0.004px;line-height:15px">Based on your solution, you might need to</span><span class="t" style="left:28.3px;top:94px;letter-spacing:0.031px;line-height:15px">install extra components for a full</span><span class="t" style="left:28.3px;top:109px;letter-spacing:-0.069px;line-height:15px">development experience.</span><span class="t" style="left:272.3px;top:79px;letter-spacing:-0.051px;color:#1C64A8;line-height:15px">Install</span><svg style="left:328px;top:81px" width="10" height="10" viewBox="0 0 10 10"><path d="M0.7 0.7 L9.3 9.3 M9.3 0.7 L0.7 9.3" stroke="#BE9435" stroke-width="1.5"/></svg><div class="a" style="left:0;top:128px;width:346px;height:1px;background:#E5E9F5"></div><svg style="left:5.9px;top:136.1px" width="5.2" height="6.8" viewBox="0 0 5.2 6.8"><path d="M0.9 3.2 V2.4 C0.9 0.4 4.3 0.4 4.3 2.4 V3.2" fill="none" stroke="#5BB2E8" stroke-width="0.9"/><rect x="0" y="3.1" width="5.2" height="3.7" fill="#1F93D6"/><rect x="2.1" y="4.2" width="1" height="1.5" fill="#CFEFFF"/></svg><svg style="left:15.1px;top:131.9px" width="14" height="14" viewBox="0 0 14 14"><path d="M0.5 7 V0.5 H13.5 V11.6 H9.2" fill="#F7F9FE" stroke="#333" stroke-width="1"/><rect x="0" y="0" width="14" height="3" fill="#333"/><g transform="translate(0,6.1) scale(0.365,0.395)"><path d="M15.4 0.2 L21.1 2.7 V17.3 L15.4 19.8 L6.9 12.3 L2.7 15.8 L0.8 14.8 V5.2 L2.7 4.2 L6.9 7.7 Z M16.6 6.8 L11.6 10 L16.6 13.2 Z M3.6 8.4 V11.6 L5.6 10 Z" fill="#7B3FC4" fill-rule="evenodd"/></g></svg><span class="t" style="left:35.4px;top:131.0px;letter-spacing:-0.120px;">Solution 'NSD' (10 of 13 projects)</span><svg style="left:10.6px;top:152.2px" width="6" height="10" viewBox="0 0 6 10"><path d="M0.9 0.9 L5 5 L0.9 9.1 Z" fill="none" stroke="#1E1E1E" stroke-width="1.05" stroke-linejoin="miter"/></svg><svg style="left:32.7px;top:152.1px" width="13.4" height="10" viewBox="0 0 13.4 10"><path d="M0 10 V0 H5 L6.2 1.4 H13.4 V10 Z" fill="#DCB67A"/></svg><span class="t" style="left:53.5px;top:149.0px;letter-spacing:0.021px;">.nuget</span><div class="a" style="left:0;top:165px;width:346px;height:18px;background:#C4D5FF"></div><svg style="left:10.6px;top:170.2px" width="6" height="10" viewBox="0 0 6 10"><path d="M0.9 0.9 L5 5 L0.9 9.1 Z" fill="none" stroke="#1E1E1E" stroke-width="1.05" stroke-linejoin="miter"/></svg><svg style="left:23.9px;top:172.0px" width="5.2" height="6.8" viewBox="0 0 5.2 6.8"><path d="M0.9 3.2 V2.4 C0.9 0.4 4.3 0.4 4.3 2.4 V3.2" fill="none" stroke="#5BB2E8" stroke-width="0.9"/><rect x="0" y="3.1" width="5.2" height="3.7" fill="#1F93D6"/><rect x="2.1" y="4.2" width="1" height="1.5" fill="#CFEFFF"/></svg><svg style="left:32.8px;top:168.9px" width="14.4" height="11.6" viewBox="0 0 14.4 11.6"><rect x="0.5" y="0.5" width="13.4" height="10.6" fill="#EAF1E8" stroke="#4B9A4A" stroke-width="1"/><path d="M6 3.6 C4.2 2.5 2.7 3.7 2.7 5.8 C2.7 7.9 4.2 9.1 6 8" fill="none" stroke="#3a3a3a" stroke-width="1"/><path d="M8.7 3.2 V8.4 M10.7 3.2 V8.4 M7.5 4.8 H11.9 M7.5 6.8 H11.9" stroke="#3a3a3a" stroke-width="0.75"/></svg><span class="t" style="left:53.5px;top:167.0px;letter-spacing:-0.857px;font-weight:bold">Business</span><svg style="left:10.6px;top:188.2px" width="6" height="10" viewBox="0 0 6 10"><path d="M0.9 0.9 L5 5 L0.9 9.1 Z" fill="none" stroke="#1E1E1E" stroke-width="1.05" stroke-linejoin="miter"/></svg><svg style="left:23.9px;top:190.0px" width="5.2" height="6.8" viewBox="0 0 5.2 6.8"><path d="M0.9 3.2 V2.4 C0.9 0.4 4.3 0.4 4.3 2.4 V3.2" fill="none" stroke="#5BB2E8" stroke-width="0.9"/><rect x="0" y="3.1" width="5.2" height="3.7" fill="#1F93D6"/><rect x="2.1" y="4.2" width="1" height="1.5" fill="#CFEFFF"/></svg><svg style="left:32.8px;top:186.9px" width="14.4" height="11.6" viewBox="0 0 14.4 11.6"><rect x="0.5" y="0.5" width="13.4" height="10.6" fill="#EAF1E8" stroke="#4B9A4A" stroke-width="1"/><path d="M6 3.6 C4.2 2.5 2.7 3.7 2.7 5.8 C2.7 7.9 4.2 9.1 6 8" fill="none" stroke="#3a3a3a" stroke-width="1"/><path d="M8.7 3.2 V8.4 M10.7 3.2 V8.4 M7.5 4.8 H11.9 M7.5 6.8 H11.9" stroke="#3a3a3a" stroke-width="0.75"/></svg><span class="t" style="left:53.5px;top:185.0px;letter-spacing:-0.317px;">CEVANextdaySchedular</span><svg style="left:10.6px;top:206.2px" width="6" height="10" viewBox="0 0 6 10"><path d="M0.9 0.9 L5 5 L0.9 9.1 Z" fill="none" stroke="#1E1E1E" stroke-width="1.05" stroke-linejoin="miter"/></svg><svg style="left:23.9px;top:208.0px" width="5.2" height="6.8" viewBox="0 0 5.2 6.8"><path d="M0.9 3.2 V2.4 C0.9 0.4 4.3 0.4 4.3 2.4 V3.2" fill="none" stroke="#5BB2E8" stroke-width="0.9"/><rect x="0" y="3.1" width="5.2" height="3.7" fill="#1F93D6"/><rect x="2.1" y="4.2" width="1" height="1.5" fill="#CFEFFF"/></svg><svg style="left:32.8px;top:204.9px" width="14.4" height="11.6" viewBox="0 0 14.4 11.6"><rect x="0.5" y="0.5" width="13.4" height="10.6" fill="#EAF1E8" stroke="#4B9A4A" stroke-width="1"/><path d="M6 3.6 C4.2 2.5 2.7 3.7 2.7 5.8 C2.7 7.9 4.2 9.1 6 8" fill="none" stroke="#3a3a3a" stroke-width="1"/><path d="M8.7 3.2 V8.4 M10.7 3.2 V8.4 M7.5 4.8 H11.9 M7.5 6.8 H11.9" stroke="#3a3a3a" stroke-width="0.75"/></svg><span class="t" style="left:53.5px;top:203.0px;letter-spacing:-0.487px;">CEVASchedular</span><svg style="left:10.6px;top:224.2px" width="6" height="10" viewBox="0 0 6 10"><path d="M0.9 0.9 L5 5 L0.9 9.1 Z" fill="none" stroke="#1E1E1E" stroke-width="1.05" stroke-linejoin="miter"/></svg><svg style="left:23.9px;top:226.0px" width="5.2" height="6.8" viewBox="0 0 5.2 6.8"><path d="M0.9 3.2 V2.4 C0.9 0.4 4.3 0.4 4.3 2.4 V3.2" fill="none" stroke="#5BB2E8" stroke-width="0.9"/><rect x="0" y="3.1" width="5.2" height="3.7" fill="#1F93D6"/><rect x="2.1" y="4.2" width="1" height="1.5" fill="#CFEFFF"/></svg><svg style="left:32.8px;top:222.9px" width="14.4" height="11.6" viewBox="0 0 14.4 11.6"><rect x="0.5" y="0.5" width="13.4" height="10.6" fill="#EAF1E8" stroke="#4B9A4A" stroke-width="1"/><path d="M6 3.6 C4.2 2.5 2.7 3.7 2.7 5.8 C2.7 7.9 4.2 9.1 6 8" fill="none" stroke="#3a3a3a" stroke-width="1"/><path d="M8.7 3.2 V8.4 M10.7 3.2 V8.4 M7.5 4.8 H11.9 M7.5 6.8 H11.9" stroke="#3a3a3a" stroke-width="0.75"/></svg><span class="t" style="left:53.5px;top:221.0px;letter-spacing:-0.329px;">Core</span><svg style="left:10.6px;top:242.2px" width="6" height="10" viewBox="0 0 6 10"><path d="M0.9 0.9 L5 5 L0.9 9.1 Z" fill="none" stroke="#1E1E1E" stroke-width="1.05" stroke-linejoin="miter"/></svg><svg style="left:23.9px;top:244.0px" width="5.2" height="6.8" viewBox="0 0 5.2 6.8"><path d="M0.9 3.2 V2.4 C0.9 0.4 4.3 0.4 4.3 2.4 V3.2" fill="none" stroke="#5BB2E8" stroke-width="0.9"/><rect x="0" y="3.1" width="5.2" height="3.7" fill="#1F93D6"/><rect x="2.1" y="4.2" width="1" height="1.5" fill="#CFEFFF"/></svg><svg style="left:32.8px;top:240.9px" width="14.4" height="11.6" viewBox="0 0 14.4 11.6"><rect x="0.5" y="0.5" width="13.4" height="10.6" fill="#EAF1E8" stroke="#4B9A4A" stroke-width="1"/><path d="M6 3.6 C4.2 2.5 2.7 3.7 2.7 5.8 C2.7 7.9 4.2 9.1 6 8" fill="none" stroke="#3a3a3a" stroke-width="1"/><path d="M8.7 3.2 V8.4 M10.7 3.2 V8.4 M7.5 4.8 H11.9 M7.5 6.8 H11.9" stroke="#3a3a3a" stroke-width="0.75"/></svg><span class="t" style="left:53.5px;top:239.0px;letter-spacing:-0.229px;">DiaryCalendarScheduler</span><svg style="left:10.6px;top:260.2px" width="6" height="10" viewBox="0 0 6 10"><path d="M0.9 0.9 L5 5 L0.9 9.1 Z" fill="none" stroke="#1E1E1E" stroke-width="1.05" stroke-linejoin="miter"/></svg><svg style="left:23.9px;top:262.0px" width="5.2" height="6.8" viewBox="0 0 5.2 6.8"><path d="M0.9 3.2 V2.4 C0.9 0.4 4.3 0.4 4.3 2.4 V3.2" fill="none" stroke="#5BB2E8" stroke-width="0.9"/><rect x="0" y="3.1" width="5.2" height="3.7" fill="#1F93D6"/><rect x="2.1" y="4.2" width="1" height="1.5" fill="#CFEFFF"/></svg><svg style="left:32.8px;top:258.9px" width="14.4" height="11.6" viewBox="0 0 14.4 11.6"><rect x="0.5" y="0.5" width="13.4" height="10.6" fill="#EAF1E8" stroke="#4B9A4A" stroke-width="1"/><path d="M6 3.6 C4.2 2.5 2.7 3.7 2.7 5.8 C2.7 7.9 4.2 9.1 6 8" fill="none" stroke="#3a3a3a" stroke-width="1"/><path d="M8.7 3.2 V8.4 M10.7 3.2 V8.4 M7.5 4.8 H11.9 M7.5 6.8 H11.9" stroke="#3a3a3a" stroke-width="0.75"/></svg><span class="t" style="left:53.5px;top:257.0px;letter-spacing:-0.174px;">ExpeditorSchedular</span><svg style="left:10.6px;top:278.2px" width="6" height="10" viewBox="0 0 6 10"><path d="M0.9 0.9 L5 5 L0.9 9.1 Z" fill="none" stroke="#1E1E1E" stroke-width="1.05" stroke-linejoin="miter"/></svg><svg style="left:23.9px;top:280.0px" width="5.2" height="6.8" viewBox="0 0 5.2 6.8"><path d="M0.9 3.2 V2.4 C0.9 0.4 4.3 0.4 4.3 2.4 V3.2" fill="none" stroke="#5BB2E8" stroke-width="0.9"/><rect x="0" y="3.1" width="5.2" height="3.7" fill="#1F93D6"/><rect x="2.1" y="4.2" width="1" height="1.5" fill="#CFEFFF"/></svg><svg style="left:32.8px;top:276.9px" width="14.4" height="11.6" viewBox="0 0 14.4 11.6"><rect x="0.5" y="0.5" width="13.4" height="10.6" fill="#EAF1E8" stroke="#4B9A4A" stroke-width="1"/><path d="M6 3.6 C4.2 2.5 2.7 3.7 2.7 5.8 C2.7 7.9 4.2 9.1 6 8" fill="none" stroke="#3a3a3a" stroke-width="1"/><path d="M8.7 3.2 V8.4 M10.7 3.2 V8.4 M7.5 4.8 H11.9 M7.5 6.8 H11.9" stroke="#3a3a3a" stroke-width="0.75"/></svg><span class="t" style="left:53.5px;top:275.0px;letter-spacing:-0.118px;">NextdaySchCollectionDeliveyUpdateScheduler</span><svg style="left:10.6px;top:296.2px" width="6" height="10" viewBox="0 0 6 10"><path d="M0.9 0.9 L5 5 L0.9 9.1 Z" fill="none" stroke="#1E1E1E" stroke-width="1.05" stroke-linejoin="miter"/></svg><svg style="left:32.7px;top:293.2px" width="15" height="15" viewBox="0 0 15 15"><path d="M3.5 11.5 H0.5 V4.5 H3.5 M3.5 4.5 V1.5 H9.5 L12.5 4 V5" fill="none" stroke="#333" stroke-width="1"/><path d="M9.3 1.8 V4.2 H12.2" fill="none" stroke="#333" stroke-width="0.9"/><path d="M4.5 5.5 H10.5 L13.5 8 V14.5 H4.5 Z" fill="#F7F9FE" stroke="#333" stroke-width="1"/><path d="M10.2 5.8 V8.3 H13.2" fill="none" stroke="#333" stroke-width="0.9"/></svg><span class="t" style="left:53.5px;top:293.0px;letter-spacing:-0.093px;">NextdayWebAPI (unloaded)</span><svg style="left:10.6px;top:314.2px" width="6" height="10" viewBox="0 0 6 10"><path d="M0.9 0.9 L5 5 L0.9 9.1 Z" fill="none" stroke="#1E1E1E" stroke-width="1.05" stroke-linejoin="miter"/></svg><svg style="left:23.9px;top:316.0px" width="5.2" height="6.8" viewBox="0 0 5.2 6.8"><path d="M0.9 3.2 V2.4 C0.9 0.4 4.3 0.4 4.3 2.4 V3.2" fill="none" stroke="#5BB2E8" stroke-width="0.9"/><rect x="0" y="3.1" width="5.2" height="3.7" fill="#1F93D6"/><rect x="2.1" y="4.2" width="1" height="1.5" fill="#CFEFFF"/></svg><svg style="left:32.8px;top:312.9px" width="14.4" height="11.6" viewBox="0 0 14.4 11.6"><rect x="0.5" y="0.5" width="13.4" height="10.6" fill="#EAF1E8" stroke="#4B9A4A" stroke-width="1"/><path d="M6 3.6 C4.2 2.5 2.7 3.7 2.7 5.8 C2.7 7.9 4.2 9.1 6 8" fill="none" stroke="#3a3a3a" stroke-width="1"/><path d="M8.7 3.2 V8.4 M10.7 3.2 V8.4 M7.5 4.8 H11.9 M7.5 6.8 H11.9" stroke="#3a3a3a" stroke-width="0.75"/></svg><span class="t" style="left:53.5px;top:311.0px;letter-spacing:-0.424px;">NSDRunAOGJobSchedular</span><svg style="left:10.6px;top:332.2px" width="6" height="10" viewBox="0 0 6 10"><path d="M0.9 0.9 L5 5 L0.9 9.1 Z" fill="none" stroke="#1E1E1E" stroke-width="1.05" stroke-linejoin="miter"/></svg><svg style="left:23.9px;top:334.0px" width="5.2" height="6.8" viewBox="0 0 5.2 6.8"><path d="M0.9 3.2 V2.4 C0.9 0.4 4.3 0.4 4.3 2.4 V3.2" fill="none" stroke="#5BB2E8" stroke-width="0.9"/><rect x="0" y="3.1" width="5.2" height="3.7" fill="#1F93D6"/><rect x="2.1" y="4.2" width="1" height="1.5" fill="#CFEFFF"/></svg><svg style="left:32.8px;top:330.9px" width="14.4" height="11.6" viewBox="0 0 14.4 11.6"><rect x="0.5" y="0.5" width="13.4" height="10.6" fill="#EAF1E8" stroke="#4B9A4A" stroke-width="1"/><path d="M6 3.6 C4.2 2.5 2.7 3.7 2.7 5.8 C2.7 7.9 4.2 9.1 6 8" fill="none" stroke="#3a3a3a" stroke-width="1"/><path d="M8.7 3.2 V8.4 M10.7 3.2 V8.4 M7.5 4.8 H11.9 M7.5 6.8 H11.9" stroke="#3a3a3a" stroke-width="0.75"/></svg><span class="t" style="left:53.5px;top:329.0px;letter-spacing:-0.402px;">NSDRunJobSchedular</span><svg style="left:10.6px;top:350.2px" width="6" height="10" viewBox="0 0 6 10"><path d="M0.9 0.9 L5 5 L0.9 9.1 Z" fill="none" stroke="#1E1E1E" stroke-width="1.05" stroke-linejoin="miter"/></svg><svg style="left:23.9px;top:352.0px" width="5.2" height="6.8" viewBox="0 0 5.2 6.8"><path d="M0.9 3.2 V2.4 C0.9 0.4 4.3 0.4 4.3 2.4 V3.2" fill="none" stroke="#5BB2E8" stroke-width="0.9"/><rect x="0" y="3.1" width="5.2" height="3.7" fill="#1F93D6"/><rect x="2.1" y="4.2" width="1" height="1.5" fill="#CFEFFF"/></svg><svg style="left:32.8px;top:348.9px" width="14.4" height="11.6" viewBox="0 0 14.4 11.6"><rect x="0.5" y="0.5" width="13.4" height="10.6" fill="#EAF1E8" stroke="#4B9A4A" stroke-width="1"/><path d="M6 3.6 C4.2 2.5 2.7 3.7 2.7 5.8 C2.7 7.9 4.2 9.1 6 8" fill="none" stroke="#3a3a3a" stroke-width="1"/><path d="M8.7 3.2 V8.4 M10.7 3.2 V8.4 M7.5 4.8 H11.9 M7.5 6.8 H11.9" stroke="#3a3a3a" stroke-width="0.75"/></svg><span class="t" style="left:53.5px;top:347.0px;letter-spacing:-0.273px;">PODAlert</span><svg style="left:10.6px;top:368.2px" width="6" height="10" viewBox="0 0 6 10"><path d="M0.9 0.9 L5 5 L0.9 9.1 Z" fill="none" stroke="#1E1E1E" stroke-width="1.05" stroke-linejoin="miter"/></svg><svg style="left:32.7px;top:365.2px" width="15" height="15" viewBox="0 0 15 15"><path d="M3.5 11.5 H0.5 V4.5 H3.5 M3.5 4.5 V1.5 H9.5 L12.5 4 V5" fill="none" stroke="#333" stroke-width="1"/><path d="M9.3 1.8 V4.2 H12.2" fill="none" stroke="#333" stroke-width="0.9"/><path d="M4.5 5.5 H10.5 L13.5 8 V14.5 H4.5 Z" fill="#F7F9FE" stroke="#333" stroke-width="1"/><path d="M10.2 5.8 V8.3 H13.2" fill="none" stroke="#333" stroke-width="0.9"/></svg><span class="t" style="left:53.5px;top:365.0px;letter-spacing:-0.013px;">WebApi (unloaded)</span><svg style="left:10.6px;top:386.2px" width="6" height="10" viewBox="0 0 6 10"><path d="M0.9 0.9 L5 5 L0.9 9.1 Z" fill="none" stroke="#1E1E1E" stroke-width="1.05" stroke-linejoin="miter"/></svg><svg style="left:32.7px;top:383.2px" width="15" height="15" viewBox="0 0 15 15"><path d="M3.5 11.5 H0.5 V4.5 H3.5 M3.5 4.5 V1.5 H9.5 L12.5 4 V5" fill="none" stroke="#333" stroke-width="1"/><path d="M9.3 1.8 V4.2 H12.2" fill="none" stroke="#333" stroke-width="0.9"/><path d="M4.5 5.5 H10.5 L13.5 8 V14.5 H4.5 Z" fill="#F7F9FE" stroke="#333" stroke-width="1"/><path d="M10.2 5.8 V8.3 H13.2" fill="none" stroke="#333" stroke-width="0.9"/></svg><span class="t" style="left:53.5px;top:383.0px;letter-spacing:-0.031px;">WebApp (unloaded)</span></div><div class="a" style="left:1013px;top:688px;width:100px;height:20px;background:#F7F9FE"></div><span class="t" style="left:1018px;top:690px;letter-spacing:-0.082px;">Solution Explorer</span><div class="a" style="left:1114.5px;top:688px;width:74px;height:19px;background:#40508D"></div><span class="t" style="left:1120.5px;top:690px;letter-spacing:-0.291px;color:#fff">Git Changes</span><div id="status" class="a"><svg style="left:4px;top:6.6px" width="16" height="11.4" viewBox="0 0 16 12"><path d="M3.4 0.6 H15.2 L12.6 11.4 H0.8 Z" fill="none" stroke="#fff" stroke-width="1.1"/></svg><span class="t" style="left:28.5px;top:4px;letter-spacing:-0.060px;color:#fff">Build failed</span><svg style="left:1041.5px;top:6px" width="10" height="12" viewBox="0 0 10 12"><path d="M5 11.5 V1.5 M0.8 5.6 L5 1.2 L9.2 5.6" fill="none" stroke="#fff" stroke-width="1.5"/></svg><span class="t" style="left:1060px;top:4px;color:#fff">0</span><div class="a" style="left:1072px;top:9px;width:0;height:0;border-left:4px solid transparent;border-right:4px solid transparent;border-bottom:4px solid #fff"></div><svg style="left:1104.5px;top:6px" width="12" height="12" viewBox="0 0 12 12"><path d="M8.6 0.6 L11.4 3.4 L4 10.8 L0.6 11.4 L1.2 8 Z" fill="#C9CFE6"/></svg><span class="t" style="left:1124px;top:4px;color:#fff">0</span><svg style="left:1153px;top:4.5px" width="14" height="14" viewBox="0 0 14 14"><path d="M7 0.3 L13.7 7 L7 13.7 L0.3 7 Z" fill="#fff"/><circle cx="5.6" cy="4.6" r="1.1" fill="#40508D"/><circle cx="5.6" cy="9.6" r="1.1" fill="#40508D"/><circle cx="9.2" cy="7" r="1.1" fill="#40508D"/><path d="M5.6 4.6 V9.6 M5.6 5 L9.2 7" stroke="#40508D" stroke-width="0.8"/></svg><span class="t" style="left:1174.5px;top:4px;letter-spacing:-0.286px;color:#fff">nsd</span><div class="a" style="left:1199px;top:9px;width:0;height:0;border-left:4px solid transparent;border-right:4px solid transparent;border-bottom:4px solid #fff"></div><svg style="left:1229px;top:5px" width="15" height="13" viewBox="0 0 15 13"><circle cx="2.2" cy="2.2" r="1.5" fill="none" stroke="#C4CBE6" stroke-width="1.1"/><circle cx="12.8" cy="2.2" r="1.5" fill="none" stroke="#C4CBE6" stroke-width="1.1"/><path d="M3.4 3.2 L7.2 7 V12.6 M11.6 3.2 L7.6 7" fill="none" stroke="#fff" stroke-width="1.5"/></svg><span class="t" style="left:1251.5px;top:4px;letter-spacing:-0.198px;color:#fff">master</span><div class="a" style="left:1293px;top:9px;width:0;height:0;border-left:4px solid transparent;border-right:4px solid transparent;border-bottom:4px solid #fff"></div><svg style="left:1327px;top:4px" width="22" height="18" viewBox="0 0 22 18"><path d="M7 1 C9.8 1 11.4 3 11.4 5.6 V9 L13 11.6 H1 L2.6 9 V5.6 C2.6 3 4.2 1 7 1 Z M5.4 12.6 H8.6 C8.6 14.6 5.4 14.6 5.4 12.6 Z" fill="#BCC3DF"/><circle cx="15.6" cy="11.8" r="5.7" fill="#E02525"/></svg><span class="t" style="left:1339.9px;top:8.6px;color:#fff;font-size:10.5px;font-weight:bold;line-height:14px">4</span></div><div id="taskbar" class="a"><div class="a" style="left:408.5px;top:0;width:35px;height:30px;background:#5a4a50"></div><div class="a" style="left:116px;top:27.5px;width:28px;height:2.5px;background:#84BBEA"></div><div class="a" style="left:135.5px;top:27.5px;width:8.5px;height:2.5px;background:#5C86B0"></div><div class="a" style="left:153.5px;top:27.5px;width:27.5px;height:2.5px;background:#84BBEA"></div><div class="a" style="left:264px;top:27.5px;width:27.5px;height:2.5px;background:#84BBEA"></div><div class="a" style="left:283px;top:27.5px;width:8.5px;height:2.5px;background:#5C86B0"></div><div class="a" style="left:301px;top:27.5px;width:27.5px;height:2.5px;background:#84BBEA"></div><div class="a" style="left:338.5px;top:27.5px;width:27.5px;height:2.5px;background:#84BBEA"></div><div class="a" style="left:357.5px;top:27.5px;width:8.5px;height:2.5px;background:#5C86B0"></div><div class="a" style="left:375.5px;top:27.5px;width:27.5px;height:2.5px;background:#84BBEA"></div><div class="a" style="left:408.5px;top:27.5px;width:35.5px;height:2.5px;background:#84BBEA"></div><div class="a" style="left:446.5px;top:27.5px;width:30.0px;height:2.5px;background:#84BBEA"></div><svg style="left:9px;top:7px" width="16" height="16" viewBox="0 0 16 16"><path d="M0 2.3 L6.6 1.4 V7.6 H0 Z M7.4 1.3 L16 0 V7.6 H7.4 Z M0 8.4 H6.6 V14.6 L0 13.7 Z M7.4 8.4 H16 V16 L7.4 14.7 Z" fill="#fff"/></svg><svg style="left:46px;top:7px" width="17" height="17" viewBox="0 0 17 17"><circle cx="10.4" cy="6.4" r="5.3" fill="none" stroke="#fff" stroke-width="1.5"/><path d="M6.6 10.2 L0.8 16" stroke="#fff" stroke-width="1.8"/></svg><svg style="left:84px;top:6px" width="18" height="18" viewBox="0 0 18 18"><defs><linearGradient id="eg" x1="0.1" y1="0.9" x2="0.9" y2="0.1"><stop offset="0" stop-color="#1868D0"/><stop offset="0.5" stop-color="#2AA4E0"/><stop offset="1" stop-color="#5BD95A"/></linearGradient></defs><circle cx="9" cy="9" r="8.6" fill="url(#eg)"/><path d="M3.6 14.8 C1.8 11 4 6.6 8.4 6.4 C11.6 6.4 12.6 8.6 11.6 10 C10.8 11 11.4 12.4 13.6 12.6 C15 12.6 16.2 12.2 17 11.4 C15.6 16 9.4 19.2 3.6 14.8 Z" fill="#1458B4"/><path d="M6.6 11 C6.6 9.2 8 8 9.6 8.2 C10.8 8.4 11.2 9.2 10.8 10 C10.2 11 10.4 12.2 12.4 12.6 C9.6 14.4 6.6 13.4 6.6 11 Z" fill="#2c1f20"/></svg><svg style="left:121px;top:6px" width="18" height="17" viewBox="0 0 18 17"><path d="M0.5 3 V1 H6.5 L8 3 H17.5 V6 H0.5 Z" fill="#E8A820"/><path d="M0.5 4.4 H17.5 V16 H0.5 Z" fill="#FFD766"/><path d="M4.4 9.6 H13.6 V16 H11 V12.4 H7 V16 H4.4 Z" fill="#3F9AE6"/></svg><svg style="left:159.5px;top:7.3px" width="15" height="15" viewBox="0 0 15 15"><circle cx="5.6" cy="5.6" r="5.4" fill="#14A4F2"/><circle cx="9.4" cy="9.4" r="5.4" fill="#14A4F2"/><circle cx="7.5" cy="7.5" r="6.4" fill="#14A4F2"/></svg><span class="t" style="left:163.6px;top:8.3px;color:#fff;font-weight:bold;font-size:10.5px;line-height:13px">S</span><svg style="left:196px;top:6px" width="17" height="18" viewBox="0 0 17 18"><circle cx="8.5" cy="9" r="8.2" fill="#1F6FD0"/><path d="M3 3 C7 0 13.6 1.4 15.4 6.6 C14 5 12 5.4 11.4 7.2 L3.6 9 Z" fill="#0F3E8E"/><path d="M2.6 8.6 H12.4 V14.4 H2.6 Z" fill="#F2F4FA"/><path d="M2.6 8.6 L7.5 12 L12.4 8.6" fill="none" stroke="#9FB2D6" stroke-width="0.9"/></svg><svg style="left:233.5px;top:6px" width="17" height="18" viewBox="0 0 17 18"><path d="M1.6 2.6 C1.6 0.2 9.8 0.2 9.8 2.6 V14.6 C9.8 17 1.6 17 1.6 14.6 Z" fill="#E9C545"/><ellipse cx="5.7" cy="2.8" rx="4.1" ry="1.7" fill="#F8E38A"/><path d="M11.5 1.5 H15.5 V5 M15.5 13 V16.5 H11.5 M1 10 V7" fill="none" stroke="#4D9C45" stroke-width="1.3"/><path d="M8.6 15 L14.6 8.4 M9.6 9 L14.4 14.6" stroke="#C9CDD6" stroke-width="1.7"/></svg><svg style="left:270px;top:6px" width="17" height="17" viewBox="0 0 17 17"><path d="M12.2 0.4 L16.6 2.4 V14.6 L12.2 16.6 L4.6 9.8 L1.8 12 L0.4 11.2 V5.8 L1.8 5 L4.6 7.2 Z M12.2 5 L7.8 8.5 L12.2 12 Z" fill="#23A7F2" fill-rule="evenodd"/><path d="M12.2 0.4 L16.6 2.4 V14.6 L12.2 16.6 Z" fill="#1177C9"/></svg><svg style="left:307px;top:7px" width="16" height="16" viewBox="0 0 16 16"><circle cx="8" cy="8" r="7.8" fill="#E94335"/><path d="M8 8 L1.2 4.2 A7.8 7.8 0 0 0 7.4 15.8 Z" fill="#34A853"/><path d="M8 8 L7.4 15.8 A7.8 7.8 0 0 0 14.9 4.4 Z" fill="#FBBC05"/><circle cx="8" cy="8" r="3.6" fill="#fff"/><circle cx="8" cy="8" r="2.8" fill="#4285F4"/></svg><svg style="left:343.5px;top:7px" width="17" height="15" viewBox="0 0 17 15"><rect x="0" y="0" width="17" height="15" fill="#D8D8D8"/><rect x="1" y="2.4" width="15" height="11.6" fill="#0A0A0A"/></svg><span class="t" style="left:346px;top:10.5px;color:#fff;font-size:7px;font-weight:bold;line-height:9px">C:\_</span><svg style="left:381px;top:7px" width="17" height="15" viewBox="0 0 17 15"><path d="M0.4 0.8 H4.2 L6 9 L8.5 2.6 L11 9 L12.8 0.8 H16.6 L12.8 14.2 H9.8 L8.5 10.4 L7.2 14.2 H4.2 Z" fill="#E8311F"/></svg><svg style="left:416.5px;top:6.5px" width="18" height="17" viewBox="0 0 22 20"><path d="M15.6 0.3 L21 2.6 V17.4 L15.6 19.7 L6.6 11.6 L2.6 14.7 L0.6 13.7 V6.3 L2.6 5.3 L6.6 8.4 Z M15.6 6.2 L10.6 10 L15.6 13.8 Z M2.7 7.9 V12.1 L5 10 Z" fill="#9B6FE0" fill-rule="evenodd"/></svg><svg style="left:453.5px;top:6.5px" width="18" height="17" viewBox="0 0 22 20"><path d="M15.6 0.3 L21 2.6 V17.4 L15.6 19.7 L6.6 11.6 L2.6 14.7 L0.6 13.7 V6.3 L2.6 5.3 L6.6 8.4 Z M15.6 6.2 L10.6 10 L15.6 13.8 Z M2.7 7.9 V12.1 L5 10 Z" fill="#8A58D8" fill-rule="evenodd"/></svg><svg style="left:463px;top:15px" width="9" height="9" viewBox="0 0 9 9"><circle cx="4.5" cy="4.5" r="4.3" fill="#2BB673"/><path d="M4.5 2 V6.6 M2.6 4.8 L4.5 6.8 L6.4 4.8" fill="none" stroke="#fff" stroke-width="1.1"/></svg><svg style="left:1124px;top:11px" width="12" height="8" viewBox="0 0 12 8"><path d="M0.8 7 L6 1.4 L11.2 7" fill="none" stroke="#fff" stroke-width="1.4"/></svg><svg style="left:1145.5px;top:7px" width="17" height="16" viewBox="0 0 17 16"><rect x="0" y="0" width="17" height="16" rx="2.5" fill="#EAF2FE"/><path d="M4.6 11.4 C2.2 11.4 2.2 8 4.6 7.8 C4.8 4.2 10.4 3.8 11.2 7.2 C14.6 7 14.8 11.4 12 11.4 Z" fill="none" stroke="#2E7BE0" stroke-width="1.3"/></svg><svg style="left:1171.5px;top:8px" width="14" height="15" viewBox="0 0 14 15"><rect x="0.6" y="3.6" width="8.8" height="10.4" rx="2.6" fill="none" stroke="#fff" stroke-width="1.1"/><path d="M9.6 7 L13 5 V11.6 L9.6 9.8" fill="none" stroke="#fff" stroke-width="1.1"/><circle cx="5" cy="7.4" r="1.4" fill="none" stroke="#fff" stroke-width="1"/><path d="M2.6 11.6 C3 9.4 7 9.4 7.4 11.6" fill="none" stroke="#fff" stroke-width="1"/><path d="M2 1.6 C4 0.2 6 0.2 8 1.6" fill="none" stroke="#fff" stroke-width="1"/></svg><svg style="left:1193px;top:8px" width="17" height="15" viewBox="0 0 17 15"><rect x="3.6" y="0.6" width="12.8" height="8.8" fill="none" stroke="#fff" stroke-width="1.1"/><path d="M10 9.4 V12.6 M6.6 12.8 H13.4" stroke="#fff" stroke-width="1.1"/><rect x="0.6" y="3.6" width="3" height="10.6" fill="#2c2221" stroke="#fff" stroke-width="1.1"/></svg><svg style="left:1218px;top:8px" width="17" height="14" viewBox="0 0 17 14"><path d="M0.6 4.6 H3.4 L7 1 V13 L3.4 9.4 H0.6 Z" fill="none" stroke="#fff" stroke-width="1.1"/><path d="M9.2 4.6 C10.4 6 10.4 8 9.2 9.4 M11.4 2.8 C13.4 5 13.4 9 11.4 11.2 M13.6 1 C16.6 4.4 16.6 9.6 13.6 13" fill="none" stroke="#fff" stroke-width="1"/></svg><span class="t" style="left:1244.5px;top:7px;letter-spacing:-1.172px;color:#fff">ENG</span><span class="t" style="left:1280.5px;top:7px;letter-spacing:-0.706px;color:#fff">18:17</span><svg style="left:1324.5px;top:8px" width="16" height="15" viewBox="0 0 16 15"><path d="M0.5 0.5 H15.5 V11.5 H11 V14.5 L8 11.5 H0.5 Z" fill="#fff"/><path d="M3 3.5 H13 M3 6 H13 M3 8.5 H13" stroke="#2c2221" stroke-width="1"/></svg></div>
</body></html>
